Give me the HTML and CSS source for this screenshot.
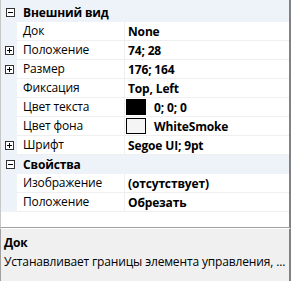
FILE: index.html
```html
<!DOCTYPE html>
<html lang="ru">
<head>
  <meta charset="UTF-8">
  <title>Свойства</title>
  <link rel="stylesheet" href="styles.css">
</head>
<body>
  <div class="panel">
    <div class="grid">
      <div class="category">
        <span class="toggle minus"></span>
        <span class="cat-name">Внешний вид</span>
      </div>
      <div class="row">
        <span class="gutter"></span>
        <span class="name">Док</span>
        <span class="value">None</span>
      </div>
      <div class="row">
        <span class="gutter"><span class="toggle plus"></span></span>
        <span class="name">Положение</span>
        <span class="value">74; 28</span>
      </div>
      <div class="row">
        <span class="gutter"><span class="toggle plus"></span></span>
        <span class="name">Размер</span>
        <span class="value">176; 164</span>
      </div>
      <div class="row">
        <span class="gutter"></span>
        <span class="name">Фиксация</span>
        <span class="value">Top, Left</span>
      </div>
      <div class="row">
        <span class="gutter"></span>
        <span class="name">Цвет текста</span>
        <span class="value"><span class="swatch black"></span>0; 0; 0</span>
      </div>
      <div class="row">
        <span class="gutter"></span>
        <span class="name">Цвет фона</span>
        <span class="value"><span class="swatch smoke"></span>WhiteSmoke</span>
      </div>
      <div class="row">
        <span class="gutter"><span class="toggle plus"></span></span>
        <span class="name">Шрифт</span>
        <span class="value">Segoe UI; 9pt</span>
      </div>
      <div class="category">
        <span class="toggle minus"></span>
        <span class="cat-name">Свойства</span>
      </div>
      <div class="row">
        <span class="gutter"></span>
        <span class="name">Изображение</span>
        <span class="value">(отсутствует)</span>
      </div>
      <div class="row">
        <span class="gutter"></span>
        <span class="name">Положение</span>
        <span class="value">Обрезать</span>
      </div>
    </div>
    <div class="help">
      <div class="help-title">Док</div>
      <div class="help-text">Устанавливает границы элемента управления, ...</div>
    </div>
  </div>
</body>
</html>
```

FILE: styles.css
```css
* {
  margin: 0;
  padding: 0;
  box-sizing: border-box;
}

body {
  width: 291px;
  height: 281px;
  background: #f0f0f0;
  font-family: "Open Sans", "Noto Sans", sans-serif;
  font-size: 12px;
  letter-spacing: -0.15px;
  color: #000;
  overflow: hidden;
}

.panel {
  display: flex;
  flex-direction: column;
  width: 291px;
  height: 281px;
}

/* сетка свойств */
.grid {
  height: 228px;
  background: #fff;
  border-left: 1px solid #c8c8c8;
  border-right: 2px solid #828282;
  border-bottom: 1px solid #a0a0a0;
}

.category {
  display: flex;
  align-items: center;
  height: 19px;
  background: #eef3fa;
}

.category:first-child {
  height: 22px;
  padding-top: 3px;
}

.category .toggle {
  margin: 0 8px 0 5px;
}

.cat-name {
  font-weight: bold;
}

.row {
  display: flex;
  height: 19px;
}

.gutter {
  width: 16px;
  flex-shrink: 0;
  display: flex;
  align-items: center;
  justify-content: center;
  background: #eef3fa;
}

.name {
  width: 108px;
  flex-shrink: 0;
  padding-left: 6px;
  line-height: 18px;
  border-bottom: 1px solid #efefef;
  border-right: 1px solid #efefef;
}

.value {
  flex: 1;
  display: flex;
  align-items: center;
  padding-left: 3px;
  font-weight: bold;
  border-bottom: 1px solid #efefef;
}

/* кнопки +/- */
.toggle {
  position: relative;
  width: 9px;
  height: 9px;
  border: 1px solid #333;
  background: #fff;
  flex-shrink: 0;
}

.toggle::before {
  content: "";
  position: absolute;
  left: 1px;
  top: 3px;
  width: 5px;
  height: 1px;
  background: #000;
}

.toggle.plus::after {
  content: "";
  position: absolute;
  left: 3px;
  top: 1px;
  width: 1px;
  height: 5px;
  background: #000;
}

.swatch {
  width: 20px;
  height: 16px;
  border: 1px solid #000;
  margin: 0 8px 0 -2px;
}

.swatch.black {
  background: #000;
}

.swatch.smoke {
  background: #f5f5f5;
}

/* описание */
.help {
  flex: 1;
  padding: 5px 3px;
  border-left: 1px solid #a0a0a0;
  border-right: 2px solid #828282;
  border-top: 1px solid #fff;
}

.help-title {
  font-weight: bold;
  line-height: 18px;
}

.help-text {
  line-height: 20px;
  white-space: nowrap;
}
```
